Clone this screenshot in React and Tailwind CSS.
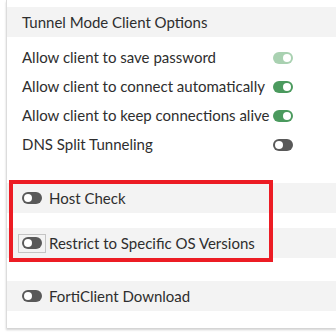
import React from 'react';

// --- Toggle switch (FortiOS style) ---
const Toggle = ({ on, disabled, focused }) => {
    const track = on
        ? (disabled ? 'bg-[#a9d1b1]' : 'bg-[#4b9a5e]')
        : 'bg-[#595959]';
    const sw = (
        <span className={`flex h-[12px] w-[20px] items-center rounded-full px-[2px] ${track} ${on ? 'justify-end' : 'justify-start'}`}>
            <span className="h-[8px] w-[8px] rounded-full bg-white" />
        </span>
    );

    if (focused) {
        return (
            <span className="flex h-[19px] w-[28px] items-center justify-center border border-[#c4c4c4]">
                {sw}
            </span>
        );
    }
    return sw;
};

const options = [
    { label: 'Allow client to save password', on: true, disabled: true },
    { label: 'Allow client to connect automatically', on: true },
    { label: 'Allow client to keep connections alive', on: true },
    { label: 'DNS Split Tunneling', on: false },
];

const SectionBand = ({ label, focused }) => (
    <div className={`flex h-[30px] items-center bg-[#f3f3f3] ${focused ? 'pl-[11px] gap-[3px]' : 'pl-[15px] gap-[7px]'}`}>
        <Toggle on={false} focused={focused} />
        <span>{label}</span>
    </div>
);

export default function App() {
    return (
        <div className="h-[333px] w-[336px] overflow-hidden bg-white font-['Lato','Liberation_Sans',sans-serif] text-[15px] text-[#2e2e2e]">
            <div className="ml-[6px] border-l border-[#dcdcdc] bg-white pt-[7px] shadow-[0_2px_2px_rgba(0,0,0,0.18)]">
                {/* header */}
                <div className="flex h-[30px] items-center bg-[#f3f3f3] pl-[15px]">
                    Tunnel Mode Client Options
                </div>

                {/* option rows */}
                <div className="pt-[6px]">
                    {options.map((o) => (
                        <div key={o.label} className="flex h-[29px] items-center pl-[15px]">
                            <span className="w-[251px]">{o.label}</span>
                            <Toggle on={o.on} disabled={o.disabled} />
                        </div>
                    ))}
                </div>

                {/* sections, with the red annotation box drawn over them */}
                <div className="relative mt-[24px]">
                    <SectionBand label="Host Check" />
                    <div className="mt-[15px]">
                        <SectionBand label="Restrict to Specific OS Versions" focused />
                    </div>
                    <div className="pointer-events-none absolute left-[2px] top-[-3px] h-[82px] w-[264px] border-[4px] border-[#ec1c24]" />
                </div>

                <div className="mt-[23px] pb-[17px]">
                    <SectionBand label="FortiClient Download" />
                </div>
            </div>
        </div>
    );
}
